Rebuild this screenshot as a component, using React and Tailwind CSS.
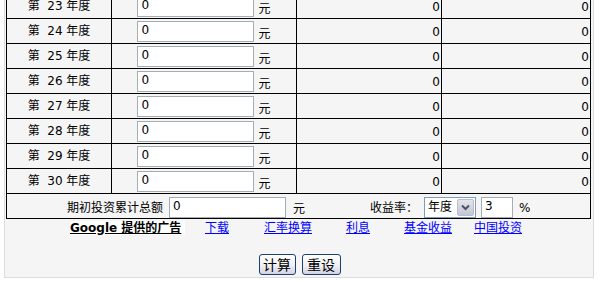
import React from "react";

const FONT = { fontFamily: '"DejaVu Sans", "Noto Sans CJK SC", sans-serif' };

function YearRow({ year }) {
  return (
    <>
      <div className="h-[25px] border-r border-b border-black flex items-center justify-center text-[12px] text-black">
        <span>第&nbsp;&nbsp;{year}&nbsp;年度</span>
      </div>
      <div className="h-[25px] border-r border-b border-black flex items-end justify-center pb-[1px]">
        <div className="w-[117px] h-[21px] border border-[#a5acb2] bg-white text-[12px] leading-[17px] pl-[3px] text-black">0</div>
        <span className="ml-[4px] mb-[2px] text-[12px] leading-none">元</span>
      </div>
      <div className="h-[25px] border-r border-b border-black flex items-center justify-end pr-[1px] pt-[2px] text-[12px]">0</div>
      <div className="h-[25px] border-r border-b border-black flex items-center justify-end pr-[1px] pt-[2px] text-[12px]">0</div>
    </>
  );
}

function Chevron() {
  return (
    <svg width="9" height="7" viewBox="0 0 9 7">
      <path d="M1 1.5 L4.5 5 L8 1.5" fill="none" stroke="#4d5260" strokeWidth="2" />
    </svg>
  );
}

export default function App() {
  const years = [23, 24, 25, 26, 27, 28, 29, 30];
  return (
    <div className="w-[598px] h-[281px] overflow-hidden bg-white text-black" style={FONT}>
      <div className="-mt-[7px] ml-[4px] w-[590px] bg-[#f5f5f5] border-x border-b border-[#dcdcdc]">
        <div className="ml-[1px] w-[585px] border-l border-t border-black grid grid-cols-[105px_185px_145px_149px]">
          {years.map((y) => (
            <YearRow key={y} year={y} />
          ))}
          <div className="col-span-4 h-[25px] border-r border-b border-black flex items-center pl-[60px] text-[12px]">
            <span className="w-[96px] whitespace-nowrap mt-[4px]">期初投资累计总额</span>
            <div className="ml-[6px] mt-[2px] w-[117px] h-[21px] border border-[#a5acb2] bg-white leading-[17px] pl-[3px]">0</div>
            <span className="ml-[7px] mt-[6px]">元</span>
            <span className="ml-[65px] mt-[4px] whitespace-nowrap">收益率：</span>
            <div className="ml-[6px] mt-[2px] w-[52px] h-[21px] border border-[#7f9db9] bg-white flex items-center">
              <span className="pl-[3px] flex-1 leading-none">年度</span>
              <div className="w-[17px] h-[17px] mr-[1px] rounded-[2px] border border-[#b8bccb] bg-gradient-to-b from-[#e4e4ec] to-[#c4c6d6] flex items-center justify-center">
                <Chevron />
              </div>
            </div>
            <div className="ml-[5px] mt-[2px] w-[32px] h-[21px] border border-[#a5acb2] bg-white leading-[17px] pl-[3px]">3</div>
            <span className="ml-[6px] mt-[4px]">%</span>
          </div>
        </div>
        <div className="h-[17px] flex items-center text-[12px] pl-[65px]">
          <div className="w-[135px]">
            <span className="bg-white font-bold underline pr-[4px] whitespace-nowrap">Google 提供的广告</span>
          </div>
          <div className="w-[59px]"><a className="text-[#0000ff] underline">下载</a></div>
          <div className="w-[82px]"><a className="text-[#0000ff] underline whitespace-nowrap">汇率换算</a></div>
          <div className="w-[58px]"><a className="text-[#0000ff] underline">利息</a></div>
          <div className="w-[70px]"><a className="text-[#0000ff] underline whitespace-nowrap">基金收益</a></div>
          <div><a className="text-[#0000ff] underline whitespace-nowrap">中国投资</a></div>
        </div>
        <div className="mt-[18px] pb-[2px] flex justify-center gap-[6px] pl-[1px]">
          <button className="w-[37px] h-[21px] rounded-[3px] border border-[#1c3f74] bg-gradient-to-b from-white via-[#f2f2f6] to-[#d4d3e2] text-[14px] leading-none text-black">计算</button>
          <button className="w-[39px] h-[21px] rounded-[3px] border border-[#1c3f74] bg-gradient-to-b from-white via-[#f2f2f6] to-[#d4d3e2] text-[14px] leading-none text-black">重设</button>
        </div>
      </div>
    </div>
  );
}
